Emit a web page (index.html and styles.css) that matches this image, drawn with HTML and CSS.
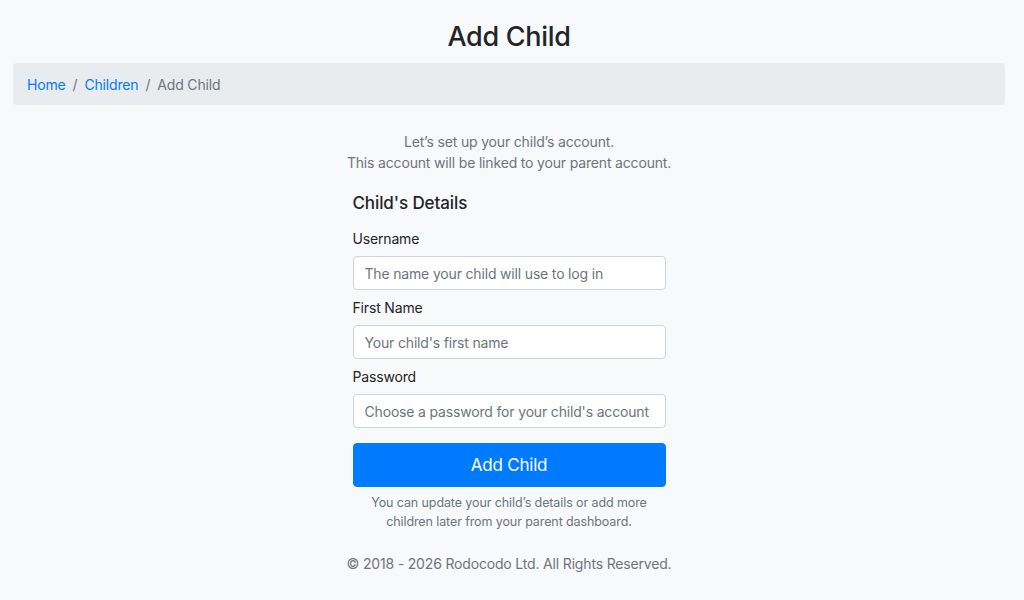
FILE: index.html
```html
<!DOCTYPE html>
<html lang="en">
<head>
<meta charset="utf-8">
<title>Add Child</title>
<link rel="stylesheet" href="styles.css">
</head>
<body>
<div class="page">
  <h1 class="title">Add Child</h1>
  <nav class="breadcrumb">
    <a href="#" class="crumb-link">Home</a>
    <span class="sep">/</span>
    <a href="#" class="crumb-link">Children</a>
    <span class="sep">/</span>
    <span class="crumb-active">Add Child</span>
  </nav>
  <p class="intro">Let’s set up your child’s account.<br>This account will be linked to your parent account.</p>
  <form class="form">
    <h2 class="section-title">Child's Details</h2>
    <label class="label" for="username">Username</label>
    <input class="input" id="username" type="text" placeholder="The name your child will use to log in">
    <label class="label" for="firstname">First Name</label>
    <input class="input" id="firstname" type="text" placeholder="Your child's first name">
    <label class="label" for="password">Password</label>
    <input class="input" id="password" type="password" placeholder="Choose a password for your child's account">
    <button class="btn" type="button">Add Child</button>
    <p class="note">You can update your child’s details or add more<br>children later from your parent dashboard.</p>
  </form>
  <footer class="footer">© 2018 - 2026 Rodocodo Ltd. All Rights Reserved.</footer>
</div>
</body>
</html>
```
FILE: styles.css
```css
* { box-sizing: border-box; }
html, body {
  margin: 0;
  padding: 0;
  background: #f8f9fa;
  font-family: Inter, "Helvetica Neue", Arial, sans-serif;
  font-size: 14px;
  line-height: 21px;
  letter-spacing: -0.17px;
  color: #212529;
}
.page {
  display: flex;
  flex-direction: column;
  align-items: stretch;
  padding: 20px 19px 0 13px;
}
.title {
  margin: 0;
  text-align: center;
  font-size: 27px;
  font-weight: 500;
  line-height: 34px;
  letter-spacing: -0.3px;
  color: #212529;
}
.breadcrumb {
  margin-top: 9px;
  height: 42px;
  display: flex;
  align-items: center;
  padding: 0 14px;
  background: #e9ecef;
  border-radius: 4px;
  font-size: 14px;
}
.crumb-link {
  color: #007bff;
  text-decoration: none;
}
.sep {
  color: #6c757d;
  padding: 0 7px;
}
.crumb-active { color: #6c757d; }
.intro {
  margin: 26px 0 0;
  text-align: center;
  color: #6c757d;
}
.form {
  align-self: center;
  width: 313px;
  display: flex;
  flex-direction: column;
  margin-top: 20px;
}
.section-title {
  margin: 0 0 14px;
  font-size: 17px;
  font-weight: 500;
  line-height: 21px;
  letter-spacing: -0.1px;
  color: #212529;
}
.label {
  display: block;
  line-height: 21px;
  margin-bottom: 7px;
}
.input {
  display: block;
  width: 100%;
  height: 34px;
  margin: 0 0 7px;
  padding: 0 11px;
  font-family: inherit;
  font-size: 14px;
  letter-spacing: -0.17px;
  color: #495057;
  background: #fff;
  border: 1px solid #ced4da;
  border-radius: 4px;
}
.input::placeholder { color: #6c757d; opacity: 1; }
.btn {
  margin-top: 8px;
  height: 44px;
  width: 100%;
  border: 1px solid #007bff;
  border-radius: 4px;
  background: #007bff;
  color: #fff;
  font-family: inherit;
  font-size: 17px;
  font-weight: 400;
  letter-spacing: -0.2px;
}
.note {
  margin: 6px 0 0;
  text-align: center;
  font-size: 12.5px;
  line-height: 19px;
  letter-spacing: -0.1px;
  color: #6c757d;
}
.footer {
  margin-top: 22px;
  text-align: center;
  color: #6c757d;
}
```
